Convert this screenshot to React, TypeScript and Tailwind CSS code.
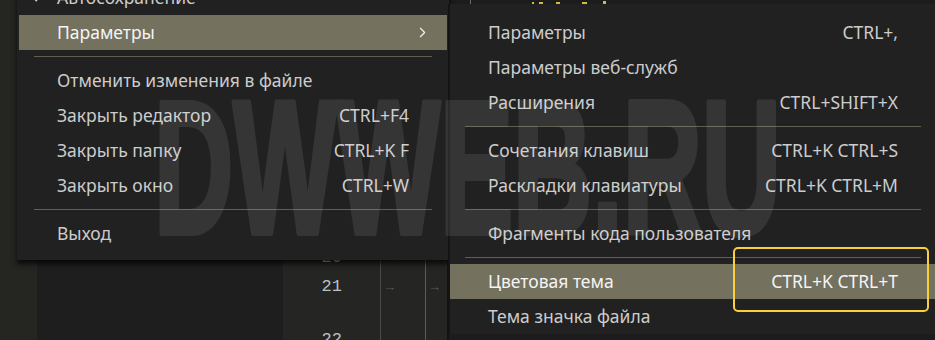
import { ChevronRight } from 'lucide-react'

type Item =
  | { kind: 'sep' }
  | { kind: 'item'; label: string; shortcut?: string; active?: boolean; submenu?: boolean; checked?: boolean }

const MAIN_MENU: Item[] = [
  { kind: 'item', label: 'Автосохранение', checked: true },
  { kind: 'item', label: 'Параметры', active: true, submenu: true },
  { kind: 'sep' },
  { kind: 'item', label: 'Отменить изменения в файле' },
  { kind: 'item', label: 'Закрыть редактор', shortcut: 'CTRL+F4' },
  { kind: 'item', label: 'Закрыть папку', shortcut: 'CTRL+K F' },
  { kind: 'item', label: 'Закрыть окно', shortcut: 'CTRL+W' },
  { kind: 'sep' },
  { kind: 'item', label: 'Выход' },
]

const SUB_MENU: Item[] = [
  { kind: 'item', label: 'Параметры', shortcut: 'CTRL+,' },
  { kind: 'item', label: 'Параметры веб-служб' },
  { kind: 'item', label: 'Расширения', shortcut: 'CTRL+SHIFT+X' },
  { kind: 'sep' },
  { kind: 'item', label: 'Сочетания клавиш', shortcut: 'CTRL+K CTRL+S' },
  { kind: 'item', label: 'Раскладки клавиатуры', shortcut: 'CTRL+K CTRL+M' },
  { kind: 'sep' },
  { kind: 'item', label: 'Фрагменты кода пользователя' },
  { kind: 'sep' },
  { kind: 'item', label: 'Цветовая тема', shortcut: 'CTRL+K CTRL+T', active: true },
  { kind: 'item', label: 'Тема значка файла' },
]

const LINES = ['20', '21', '', '22']

function MenuRow({ item }: { item: Item }) {
  if (item.kind === 'sep') {
    return <div className="mx-[15px] my-[6px] h-px bg-[#615e52]" />
  }
  return (
    <div
      className={`relative flex h-[35px] items-center justify-between px-[38px] text-[17.5px] ${
        item.active ? 'bg-[#74715f] text-[#f4f4f4]' : 'text-[#cccccc]'
      }`}
    >
      {item.checked && (
        <svg className="absolute left-[12px] top-[10px]" width="14" height="14" viewBox="0 0 14 14">
          <path d="M2 7.5l3.2 3.2L12 3.5" fill="none" stroke="#cccccc" strokeWidth="1.3" />
        </svg>
      )}
      <span>{item.label}</span>
      {item.shortcut && <span>{item.shortcut}</span>}
      {item.submenu && (
        <ChevronRight className="absolute right-[16px] top-[9px]" size={17} strokeWidth={1.6} color="#f4f4f4" />
      )}
    </div>
  )
}

function ArrowColumn({ className }: { className: string }) {
  return (
    <div className={`flex flex-col pt-[243px] text-[13px] text-[#5a5a54] ${className}`}>
      {LINES.map((n, i) => (
        <span key={i} className={`flex shrink-0 items-center pl-[2px] ${n ? 'h-[29px]' : 'h-[24px]'}`}>
          {n && '→'}
        </span>
      ))}
    </div>
  )
}

export default function App() {
  return (
    <div className="relative h-[340px] w-[935px] overflow-hidden bg-[#1e1e1e] font-['Noto_Sans',sans-serif]">
      {/* editor behind the menus */}
      <div className="flex h-full">
        <div className="w-[37px] bg-[#252622]" />
        <div className="w-[246px] bg-[#1e1e1e]" />
        <div className="flex w-[164px] bg-[#252523]">
          <div className="flex w-[59px] flex-col pt-[243px] font-['Liberation_Mono',monospace] text-[17px] text-[#b9c0c6]">
            {LINES.map((n, i) => (
              <span key={i} className={`flex shrink-0 items-center justify-end ${n ? 'h-[29px]' : 'h-[24px]'}`}>
                {n}
              </span>
            ))}
          </div>
          <div className="w-[38px]" />
          <ArrowColumn className="w-[45px] border-l border-[#4b4b47]" />
          <ArrowColumn className="flex-1 border-l border-[#5c5c57]" />
        </div>
        <div className="w-[2px] bg-[#131313]" />
        <div className="flex-1 bg-[#1c1c1c]">
          <div className="flex h-[4px] items-end pl-[21px]">
            <div className="h-[4px] w-px bg-[#6b6b6b]" />
            <div className="ml-[61px] h-[2px] w-[2px] bg-[#d7ba3a]" />
            <div className="ml-[5px] h-[2px] w-[4px] bg-[#d7ba3a]" />
            <div className="ml-[13px] h-[2px] w-[4px] bg-[#d7ba3a]" />
            <div className="ml-[22px] h-[2px] w-[5px] bg-[#d7ba3a]" />
            <div className="ml-[16px] h-[3px] w-[3px] bg-[#d7ba3a]" />
          </div>
        </div>
      </div>

      {/* file menu */}
      <div className="absolute left-[17px] top-[-20px] w-[432px] bg-[#212121] px-[2px] pb-[9px] shadow-[0_4px_5px_rgba(0,0,0,0.75)]">
        {MAIN_MENU.map((item, i) => (
          <MenuRow key={i} item={item} />
        ))}
      </div>

      {/* preferences submenu */}
      <div className="absolute left-[448px] top-[4px] w-[488px] border-l-2 border-[#141414] bg-[#212121] pt-[11px]">
        {SUB_MENU.map((item, i) => (
          <MenuRow key={i} item={item} />
        ))}
      </div>

      {/* highlight box */}
      <div className="pointer-events-none absolute left-[733px] top-[247px] h-[65px] w-[196px] rounded-[5px] border-2 border-[#f9cf3a]" />

      {/* watermark */}
      <svg className="pointer-events-none absolute left-[150px] top-[90px]" width="640" height="150">
        <g opacity="0.09">
          <text
            x="4"
            y="143"
            textLength="627"
            lengthAdjust="spacingAndGlyphs"
            fontFamily="'Liberation Sans', sans-serif"
            fontWeight="700"
            fontSize="190"
            fill="#ffffff"
            stroke="#ffffff"
            strokeWidth="6"
            strokeLinejoin="round"
          >
            DWWEB.RU
          </text>
        </g>
      </svg>
    </div>
  )
}
